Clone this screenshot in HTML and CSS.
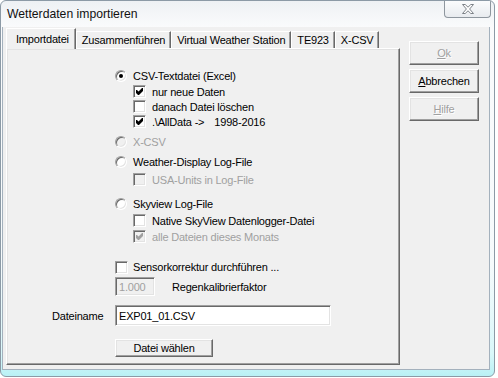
FILE: index.html
```html
<!DOCTYPE html>
<html lang="de">
<head>
    <meta charset="UTF-8">
    <title>Wetterdaten importieren</title>
    <link rel="stylesheet" href="styles.css">
</head>
<body>
    <div class="window">
        <div class="titlebar">
            <span class="title">Wetterdaten importieren</span>
            <span class="close">
                <svg width="12" height="10" viewBox="0 0 12 10"><polygon points="0.5,0.5 3.2,0.5 6,3.2 8.8,0.5 11.5,0.5 7.6,5 11.5,9.5 8.8,9.5 6,6.8 3.2,9.5 0.5,9.5 4.4,5" fill="#fff" stroke="#7d8288" stroke-width="1"/></svg>
            </span>
        </div>
        <div class="client">
            <div class="tabctl">
                <div class="tabrow">
                    <span class="tab active">Importdatei</span>
                    <span class="tab">Zusammenführen</span>
                    <span class="tab">Virtual Weather Station</span>
                    <span class="tab">TE923</span>
                    <span class="tab">X-CSV</span>
                </div>
                <div class="panel">
                    <div class="opt"><span class="radio on"></span>CSV-Textdatei (Excel)</div>
                    <div class="opt sub row15"><span class="box"><svg width="7" height="7" viewBox="0 0 7 7"><polygon points="0,2 1,2 2.5,3.6 6,0 7,0 7,3 3,7 2,7 0,5"/></svg></span>nur neue Daten</div>
                    <div class="opt sub row15"><span class="box"></span>danach Datei löschen</div>
                    <div class="opt sub row15"><span class="box"><svg width="7" height="7" viewBox="0 0 7 7"><polygon points="0,2 1,2 2.5,3.6 6,0 7,0 7,3 3,7 2,7 0,5"/></svg></span>.\AllData -&gt;<span class="range">1998-2016</span></div>

                    <div class="opt off mt5"><span class="radio"></span>X-CSV</div>

                    <div class="opt mt4"><span class="radio"></span>Weather-Display Log-File</div>
                    <div class="opt sub row15 off mt2"><span class="box"></span>USA-Units in Log-File</div>

                    <div class="opt mt9"><span class="radio"></span>Skyview Log-File</div>
                    <div class="opt sub row15 mt1"><span class="box"></span>Native SkyView Datenlogger-Datei</div>
                    <div class="opt sub row15 off mt1"><span class="box"><svg width="7" height="7" viewBox="0 0 7 7"><polygon points="0,2 1,2 2.5,3.6 6,0 7,0 7,3 3,7 2,7 0,5"/></svg></span>alle Dateien dieses Monats</div>

                    <div class="opt mt15"><span class="box near"></span>Sensorkorrektur durchführen ...</div>
                    <div class="factor-row mt2">
                        <span class="edit small">1.000</span>
                        <span class="factor-label">Regenkalibrierfaktor</span>
                    </div>

                    <div class="file-row mt9">
                        <label>Dateiname</label>
                        <span class="edit wide">EXP01_01.CSV</span>
                    </div>
                    <button class="btn pick">Datei wählen</button>
                </div>
            </div>
            <div class="buttons">
                <button class="btn" disabled><u>O</u>k</button>
                <button class="btn"><u>A</u>bbrechen</button>
                <button class="btn" disabled><u>H</u>ilfe</button>
            </div>
        </div>
    </div>
</body>
</html>
```

FILE: styles.css
```css
body {
    margin: 0;
    background: #fff;
    font-family: "Liberation Sans", Arial, sans-serif;
    font-size: 11px;
    letter-spacing: -0.2px;
    color: #000;
}
.window {
    width: 495px;
    height: 377px;
    box-sizing: border-box;
    border: 1px solid #8c9aa6;
    border-radius: 6px;
    overflow: hidden;
    background: linear-gradient(180deg, #eef1f4 0%, #fafbfc 7%, #f6fbfc 70%, #daf8fa 94%, #b9f1f5 100%);
}
.titlebar {
    display: flex;
    height: 26px;
}
.title {
    padding-left: 6px;
    line-height: 26px;
    font-size: 12.2px;
    letter-spacing: 0;
    color: #111;
}
.close {
    margin-left: auto;
    margin-right: 3px;
    width: 47px;
    height: 17px;
    box-sizing: border-box;
    border: 1px solid #8e969e;
    border-top: none;
    border-radius: 0 0 4px 4px;
    background: linear-gradient(#fbfcfd, #e8ebef);
    display: flex;
    align-items: center;
    justify-content: center;
}
.client {
    margin-left: 1px;
    width: 488px;
    height: 343px;
    box-sizing: border-box;
    border: 1px solid #a4b1bd;
    border-top: none;
    background: #f0f0f0;
    display: flex;
    padding: 1px 0 0 3px;
}
.tabctl {
    width: 394px;
}
.tabrow {
    display: flex;
    align-items: flex-end;
    height: 20px;
}
.tab {
    height: 17px;
    box-sizing: border-box;
    padding: 1px 5px 0 5px;
    line-height: 15px;
    border: 1px solid #fff;
    border-bottom: none;
    border-right-color: #696969;
    box-shadow: inset -1px 0 #a0a0a0;
    white-space: nowrap;
}
.tab.active {
    position: relative;
    z-index: 1;
    height: 21px;
    margin-bottom: -1px;
    padding: 2px 6px 0 9px;
    line-height: 16px;
    background: #f0f0f0;
}
.panel {
    height: 317px;
    box-sizing: border-box;
    border: 1px solid;
    border-color: #fff #696969 #696969 #fff;
    box-shadow: inset -1px -1px #a0a0a0, inset 1px 1px #e3e3e3;
    padding: 19px 0 0 108px;
}
.opt {
    display: flex;
    align-items: center;
    height: 16px;
    white-space: nowrap;
}
.opt.row15 {
    height: 15px;
}
.opt.sub {
    padding-left: 18px;
}
.opt.off {
    color: #a0a0a0;
}
.mt1 { margin-top: 1px; }
.mt2 { margin-top: 2px; }
.mt4 { margin-top: 4px; }
.mt5 { margin-top: 5px; }
.mt9 { margin-top: 9px; }
.mt15 { margin-top: 15px; }
.radio {
    width: 12px;
    height: 12px;
    flex-shrink: 0;
    box-sizing: border-box;
    border-radius: 50%;
    border: 1px solid;
    border-color: #a0a0a0 #fff #fff #a0a0a0;
    box-shadow: inset 1px 1px #696969, inset -1px -1px #e3e3e3;
    background: #fff;
    margin-right: 6px;
    display: flex;
    align-items: center;
    justify-content: center;
}
.radio.on::after {
    content: "";
    width: 4px;
    height: 4px;
    border-radius: 50%;
    background: #000;
}
.off .radio,
.off .box {
    background: #f0f0f0;
}
.box {
    width: 13px;
    height: 13px;
    flex-shrink: 0;
    box-sizing: border-box;
    border: 1px solid;
    border-color: #a0a0a0 #fff #fff #a0a0a0;
    box-shadow: inset 1px 1px #696969, inset -1px -1px #e3e3e3;
    background: #fff;
    margin-right: 6px;
    display: flex;
    align-items: center;
    justify-content: center;
}
.box.near {
    margin-right: 5px;
}
.box svg {
    fill: #000;
}
.off .box svg {
    fill: #a0a0a0;
}
.range {
    margin-left: 10px;
}
.edit {
    box-sizing: border-box;
    display: flex;
    align-items: center;
    padding-left: 3px;
    border: 1px solid;
    border-color: #a0a0a0 #fff #fff #a0a0a0;
    box-shadow: inset 1px 1px #696969, inset -1px -1px #e3e3e3;
    background: #fff;
    white-space: nowrap;
}
.edit.small {
    width: 40px;
    height: 19px;
    background: #f0f0f0;
    color: #a0a0a0;
}
.edit.wide {
    width: 216px;
    height: 21px;
}
.factor-row {
    display: flex;
    align-items: center;
}
.factor-label {
    margin-left: 17px;
}
.file-row {
    display: flex;
    align-items: center;
    margin-left: -63px;
}
.file-row label {
    width: 63px;
}
.btn {
    width: 70px;
    height: 24px;
    padding: 0;
    font: inherit;
    letter-spacing: inherit;
    color: #000;
    background: #f0f0f0;
    border: 1px solid;
    border-color: #fff #696969 #696969 #fff;
    box-shadow: inset -1px -1px #a0a0a0, inset 1px 1px #e3e3e3;
}
.btn:disabled {
    color: #a0a0a0;
    text-shadow: 1px 1px #fff;
}
.btn.pick {
    display: block;
    width: 98px;
    height: 18px;
    margin-top: 13px;
}
.buttons {
    display: flex;
    flex-direction: column;
    gap: 4px;
    margin: 13px 0 0 9px;
}
```
